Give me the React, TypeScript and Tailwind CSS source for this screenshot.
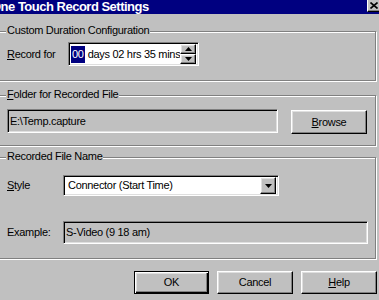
import React from "react";

const raised =
  "border border-t-white border-l-white border-r-black border-b-black shadow-[inset_-1px_-1px_0_#808080,inset_1px_1px_0_#dfdfdf]";
const sunken =
  "border border-t-[#808080] border-l-[#808080] border-r-white border-b-white shadow-[inset_1px_1px_0_#000,inset_-1px_-1px_0_#dfdfdf]";
const group =
  "relative ml-[-3px] w-[379px] border border-[#808080] shadow-[inset_1px_1px_0_#fff,1px_1px_0_#fff]";

const Arrow = ({ up }: { up?: boolean }) => (
  <svg width="7" height="4" viewBox="0 0 7 4">
    <polygon points={up ? "3.5,0 7,4 0,4" : "0,0 7,0 3.5,4"} fill="#000" />
  </svg>
);

const Legend = ({ children }: { children: React.ReactNode }) => (
  <span className="absolute left-[8px] top-[-8px] bg-[#c0c0c0] px-[1px] leading-[13px]">
    {children}
  </span>
);

export default function App() {
  return (
    <div className="w-[379px] h-[300px] overflow-hidden bg-[#c0c0c0] text-black text-[11px] tracking-[-0.3px] font-['Liberation_Sans',Arial,sans-serif]">
      {/* title bar */}
      <div className="flex h-[14px] bg-[#000080] items-start">
        <div className="flex-1 ml-[-9px] text-white font-bold text-[13px] leading-[14px] tracking-[-0.5px] whitespace-nowrap">
          One Touch Record Settings
        </div>
        <div className="w-[12px] h-[12px] border-l border-l-white border-b border-b-black shadow-[inset_0_-1px_0_#808080] bg-[#c0c0c0] flex items-center justify-center">
          <svg width="8" height="7" viewBox="0 0 8 7">
            <path d="M0.5 0.5 L7.5 6.5 M7.5 0.5 L0.5 6.5" stroke="#000" strokeWidth="1.6" />
          </svg>
        </div>
      </div>

      {/* custom duration */}
      <div className={`${group} mt-[17px] h-[50px] pt-[10px] pl-[9px]`}>
        <Legend>Custom Duration Configuration</Legend>
        <div className="flex items-center">
          <span className="w-[61px]">
            <span className="underline">R</span>ecord for
          </span>
          <div className={`${sunken} bg-white w-[131px] h-[24px] flex items-center p-[1px] pl-[2px] pr-[2px]`}>
            <div className="flex-1 flex items-center whitespace-nowrap">
              <span className="bg-[#000080] text-white px-[1px] leading-[17px]">00</span>
              <span className="ml-[3px]">days 02 hrs 35 mins</span>
            </div>
            <div className="flex flex-col w-[16px]">
              <div className={`${raised} h-[10px] bg-[#c0c0c0] flex items-center justify-center`}>
                <Arrow up />
              </div>
              <div className={`${raised} h-[10px] bg-[#c0c0c0] flex items-center justify-center`}>
                <Arrow />
              </div>
            </div>
          </div>
        </div>
      </div>

      {/* folder */}
      <div className={`${group} mt-[14px] h-[51px] pt-[13px] pl-[9px]`}>
        <Legend>
          <span className="underline">F</span>older for Recorded File
        </Legend>
        <div className="flex items-start">
          <div className={`${sunken} w-[271px] h-[24px] flex items-center pl-[2px]`}>
            E:\Temp.capture
          </div>
          <button className={`${raised} ml-[13px] mt-[1px] w-[76px] h-[24px] bg-[#c0c0c0] flex items-center justify-center`}>
            <span className="underline">B</span>rowse
          </button>
        </div>
      </div>

      {/* recorded file name */}
      <div className={`${group} mt-[11px] h-[102px] pt-[17px] pl-[9px]`}>
        <Legend>Recorded File Name</Legend>
        <div className="flex items-center">
          <span className="w-[56px]">
            <span className="underline">S</span>tyle
          </span>
          <div className={`${sunken} bg-white w-[216px] h-[21px] flex items-center pl-[4px] pr-[2px]`}>
            <span className="flex-1 whitespace-nowrap">Connector (Start Time)</span>
            <div className={`${raised} w-[16px] h-[17px] bg-[#c0c0c0] flex items-center justify-center`}>
              <Arrow />
            </div>
          </div>
        </div>
        <div className="flex items-center mt-[25px]">
          <span className="w-[56px]">Example:</span>
          <div className={`${sunken} w-[305px] h-[23px] flex items-center pl-[2px]`}>
            S-Video (9 18 am)
          </div>
        </div>
      </div>

      {/* buttons */}
      <div className="flex mt-[12px] ml-[134px] gap-[8px]">
        <button className="w-[75px] h-[23px] border border-black bg-[#c0c0c0] shadow-[inset_1px_1px_0_#fff,inset_-1px_-1px_0_#000,inset_-2px_-2px_0_#808080,inset_2px_2px_0_#dfdfdf] flex items-center justify-center">
          OK
        </button>
        <button className={`${raised} w-[76px] h-[23px] bg-[#c0c0c0] flex items-center justify-center`}>
          Cancel
        </button>
        <button className={`${raised} w-[76px] h-[23px] bg-[#c0c0c0] flex items-center justify-center`}>
          <span className="underline">H</span>elp
        </button>
      </div>
    </div>
  );
}
